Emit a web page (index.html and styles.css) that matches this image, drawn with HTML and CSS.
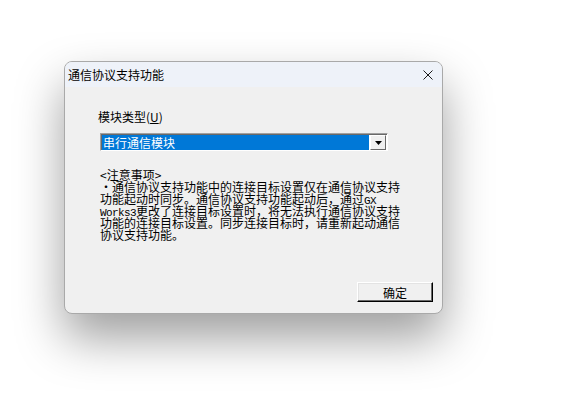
FILE: index.html
```html
<!DOCTYPE html>
<html lang="zh-CN">
<head>
  <meta charset="UTF-8">
  <meta name="viewport" content="width=device-width, initial-scale=1.0">
  <title>通信协议支持功能</title>
  <link rel="stylesheet" href="styles.css">
</head>
<body>
  <div class="window">
    <div class="titlebar">
      <span class="title">通信协议支持功能</span>
      <button class="close-btn" aria-label="关闭">
        <svg width="10" height="10" viewBox="0 0 10 10">
          <path d="M0.5 0.5 L9.5 9.5 M9.5 0.5 L0.5 9.5" stroke="#1a1a1a" stroke-width="1"/>
        </svg>
      </button>
    </div>

    <div class="content">
      <label class="field-label">模块类型(<u>U</u>)</label>
      <div class="combo">
        <div class="combo-value">串行通信模块</div>
        <div class="combo-arrow">
          <svg width="7" height="4" viewBox="0 0 7 4"><path d="M0 0 H7 L3.5 4 Z" fill="#000"/></svg>
        </div>
      </div>

      <div class="note">
        <div class="note-line">&lt;注意事项&gt;</div>
        <div class="note-line">・通信协议支持功能中的连接目标设置仅在通信协议支持</div>
        <div class="note-line">功能起动时同步。通信协议支持功能起动后，通过<span class="latin">GX</span></div>
        <div class="note-line"><span class="latin">Works3</span>更改了连接目标设置时，将无法执行通信协议支持</div>
        <div class="note-line">功能的连接目标设置。同步连接目标时，请重新起动通信</div>
        <div class="note-line">协议支持功能。</div>
      </div>

      <button class="ok-btn">确定</button>
    </div>
  </div>
</body>
</html>
```

FILE: styles.css
```css
html, body {
  min-height: 100%;
}

body {
  margin: 0;
  min-height: 411px;
  background: #fff;
  font-family: "Noto Sans CJK SC", "Liberation Sans", sans-serif;
  font-size: 12px;
  color: #000;
  overflow: hidden;
}

.window {
  width: 379px;
  height: 253px;
  margin: 61px 0 0 64px;
  box-sizing: border-box;
  border: 1px solid #a9a9a9;
  border-radius: 8px;
  background: #f0f0f0;
  box-shadow: 0 24px 48px rgba(0, 0, 0, 0.38);
  overflow: hidden;
  display: flex;
  flex-direction: column;
}

.titlebar {
  height: 25px;
  flex-shrink: 0;
  background: #eef2f9;
  display: flex;
  align-items: center;
  justify-content: space-between;
  padding: 0 9px 0 3px;
}

.title {
  font-size: 12px;
  line-height: 14px;
}

.close-btn {
  border: none;
  background: none;
  padding: 0;
  width: 10px;
  height: 10px;
  display: flex;
}

.content {
  flex: 1;
  display: flex;
  flex-direction: column;
  padding: 23px 0 0 33px;
}

.field-label {
  line-height: 14px;
  height: 14px;
}

.field-label u {
  text-underline-offset: 1px;
}

.combo {
  margin-top: 9px;
  margin-left: 2px;
  width: 288px;
  height: 18px;
  box-sizing: border-box;
  border-top: 1px solid #a0a0a0;
  border-left: 1px solid #a0a0a0;
  border-right: 1px solid #fff;
  border-bottom: 1px solid #fff;
  box-shadow: inset 1px 1px 0 #696969;
  background: #fff;
  display: flex;
  padding: 1px 1px 0 1px;
}

.combo-value {
  flex: 1;
  background: #0078d7;
  color: #fff;
  font-size: 12px;
  line-height: 15px;
  padding-left: 1px;
  margin-right: 1px;
}

.combo-arrow {
  width: 16px;
  height: 15px;
  box-sizing: border-box;
  background: #f0f0f0;
  border-top: 1px solid #fff;
  border-left: 1px solid #fff;
  border-right: 1px solid #696969;
  border-bottom: 1px solid #696969;
  display: flex;
  align-items: center;
  justify-content: center;
}

.note {
  margin: 18px 0 0 2px;
  font-size: 12px;
}

.note-line {
  height: 12px;
  line-height: 12px;
  white-space: nowrap;
}

.latin {
  font-family: "Liberation Mono", monospace;
  font-size: 11px;
  letter-spacing: -0.6px;
}

.ok-btn {
  margin-top: auto;
  margin-bottom: 11px;
  margin-right: 9px;
  align-self: flex-end;
  width: 76px;
  height: 20px;
  box-sizing: border-box;
  padding: 0;
  font-family: inherit;
  font-size: 12px;
  background: #f0f0f0;
  border-top: 1px solid #fff;
  border-left: 1px solid #fff;
  border-right: 1px solid #000;
  border-bottom: 1px solid #000;
  box-shadow: inset -1px -1px 0 #696969, inset 1px 1px 0 #e3e3e3;
  color: #000;
}
```
